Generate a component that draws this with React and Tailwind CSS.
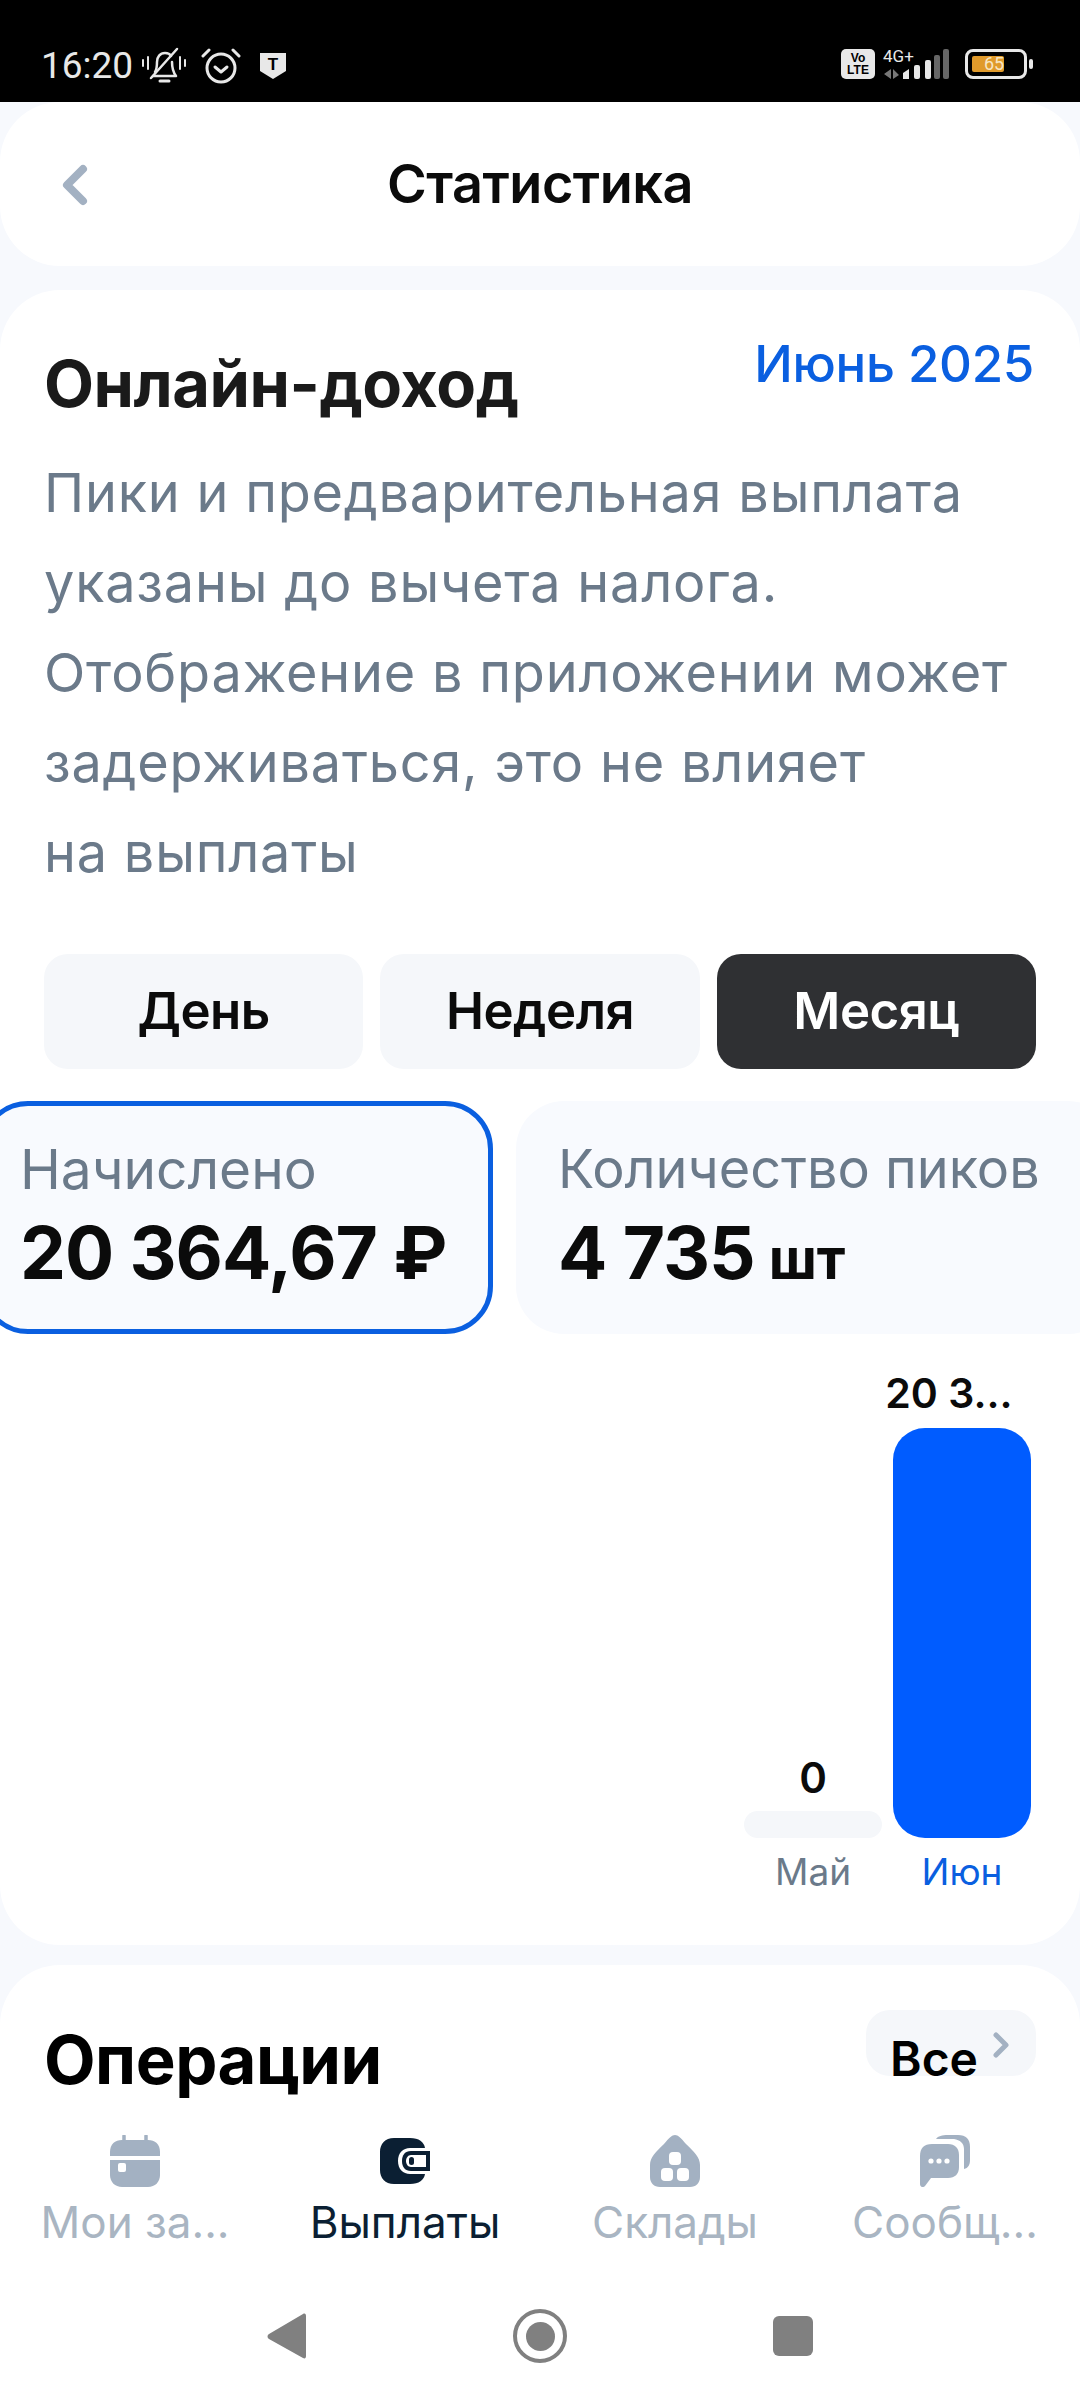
import { ChevronLeft, ChevronRight } from 'lucide-react';

const BellMutedIcon = () => (
  <svg width="44" height="38" viewBox="0 0 44 38" fill="none" stroke="#e8e8e8" strokeWidth="2.5" strokeLinecap="round" strokeLinejoin="round">
    <path d="M13 25c2-3 2-6 2-10 0-5 3-9 8-9 3 0 5 1 6 3" />
    <path d="M30 15c0 6 1 10 4 14H11" />
    <path d="M18 34h9" strokeWidth="3" />
    <path d="M9 31 35 2" />
    <path d="M1 13v6M6 10v12M38 10v12M43 13v6" strokeWidth="2" />
  </svg>
);

const AlarmIcon = () => (
  <svg width="40" height="36" viewBox="0 0 40 36" fill="none" stroke="#e8e8e8" strokeLinecap="round" strokeLinejoin="round">
    <circle cx="20" cy="20" r="14" strokeWidth="3" />
    <path d="M14 19l6 5 6-5" strokeWidth="3" />
    <path d="M2 8 8 2M38 8 32 2" strokeWidth="3" />
  </svg>
);

const CalendarIcon = () => (
  <svg width="50" height="52" viewBox="0 0 50 52">
    <path d="M14 1v8M36 1v8" stroke="#a3b1c2" strokeWidth="3.5" strokeLinecap="round" />
    <path d="M0 17C0 9 5 5 12 5h26c7 0 12 4 12 12v4H0z" fill="#a3b1c2" />
    <path d="M0 25h50v15c0 7-5 12-12 12H12C5 52 0 47 0 40z" fill="#a3b1c2" />
    <rect x="8" y="28" width="8" height="9" rx="2" fill="#fff" />
  </svg>
);

const WalletIcon = () => (
  <svg width="50" height="46" viewBox="0 0 50 46">
    <path d="M14 0h16c9 0 14 4 15 10H30c-7 0-12 5-12 13s5 13 12 13h15c-1 6-6 10-15 10H14C5 46 0 40 0 32V14C0 6 5 0 14 0z" fill="#0b1f33" />
    <path d="M31 13h19v20H31c-6 0-9-4-9-10s3-10 9-10z" fill="#0b1f33" />
    <path d="M31 17h15v12H31c-3 0-5-3-5-6s2-6 5-6z" fill="#fff" />
    <rect x="29" y="19" width="5" height="8" rx="2.5" fill="#0b1f33" />
  </svg>
);

const WarehouseIcon = () => (
  <svg width="50" height="52" viewBox="0 0 50 52">
    <path d="M25 0c3 0 6 3 11 9 8 8 14 13 14 21v12c0 6-4 10-10 10H10C4 52 0 48 0 42V30C0 22 6 17 14 9 19 3 22 0 25 0z" fill="#a3b1c2" />
    <rect x="19" y="17" width="12" height="13" rx="4" fill="#fff" />
    <rect x="11" y="33" width="12" height="13" rx="4" fill="#fff" />
    <rect x="27" y="33" width="12" height="13" rx="4" fill="#fff" />
  </svg>
);

const ChatIcon = () => (
  <svg width="50" height="52" viewBox="0 0 50 52">
    <path d="M16 4c2-3 6-4 12-4h10c8 0 12 4 12 12v13c0 5-2 8-6 9V14c0-6-4-9-10-10z" fill="#a3b1c2" />
    <path d="M12 9h16c7 0 11 4 11 11v12c0 7-4 11-11 11H11l-6 8c-2 2-5 1-5-2V21C0 13 4 9 12 9z" fill="#a3b1c2" />
    <circle cx="11" cy="26" r="2.6" fill="#fff" />
    <circle cx="19" cy="26" r="2.6" fill="#fff" />
    <circle cx="27" cy="26" r="2.6" fill="#fff" />
  </svg>
);

const navItems = [
  { label: 'Мои за...', Icon: CalendarIcon },
  { label: 'Выплаты', Icon: WalletIcon, active: true },
  { label: 'Склады', Icon: WarehouseIcon },
  { label: 'Сообщ...', Icon: ChatIcon },
];

const StatusBar = () => (
  <div className="h-[102px] shrink-0 bg-black flex items-end justify-between pl-[41px] pr-[47px] text-[#e8e8e8]">
    <div className="flex items-center pb-[17px]">
      <span className="text-[37px] leading-[36px] font-['Roboto',sans-serif]">16:20</span>
      <div className="ml-[9px]">
        <BellMutedIcon />
      </div>
      <div className="ml-[15px]">
        <AlarmIcon />
      </div>
      <svg width="28" height="28" viewBox="0 0 28 28" className="ml-[18px]">
        <path d="M1 1h26v18l-13 8-13-8z" fill="#e8e8e8" />
        <text x="14" y="18" textAnchor="middle" fontSize="17" fontWeight="900" fill="#000" fontFamily="Liberation Sans, sans-serif">T</text>
      </svg>
    </div>
    <div className="flex items-end gap-[8px] pb-[23px]">
      <div className="w-[34px] h-[30px] rounded-[5px] bg-[#e8e8e8] text-black flex flex-col items-center justify-center text-[12px] leading-[12px] font-bold font-['Liberation_Sans',sans-serif]">
        <span>Vo</span>
        <span>LTE</span>
      </div>
      <div className="relative w-[68px] h-[30px]">
        <span className="absolute left-0 top-[-1px] text-[17px] leading-[17px] font-['Roboto',sans-serif]">4G+</span>
        <svg width="68" height="30" viewBox="0 0 68 30" className="absolute left-0 top-0">
          <path d="M8 20v10l-7-5zM10 20l6 6-6 4z" fill="#777" />
          <path d="M20 24l6-4v10h-6z" fill="#e8e8e8" />
          <rect x="31" y="16" width="6" height="14" rx="2" fill="#e8e8e8" />
          <rect x="42" y="11" width="6" height="19" rx="2" fill="#e8e8e8" />
          <rect x="51" y="6" width="6" height="24" rx="2" fill="#666" />
          <rect x="60" y="0" width="6" height="30" rx="2" fill="#666" />
        </svg>
      </div>
      <div className="ml-[6px] w-[62px] h-[30px] rounded-[8px] border-[3px] border-[#e8e8e8] p-[4px] flex">
        <div className="w-[32px] h-full rounded-[2px] bg-[#e09a2b] flex items-center pl-[12px] text-[18px] leading-[18px] text-[#f7e6c4] font-['Roboto',sans-serif]">65</div>
      </div>
      <div className="w-[4px] h-[10px] rounded-[2px] bg-[#e8e8e8] -ml-[6px] mb-[10px]"></div>
    </div>
  </div>
);

export default function App() {
  return (
    <div className="w-[1080px] h-[2400px] bg-[#f7f9fd] flex flex-col overflow-hidden font-['Inter',sans-serif]">
      <StatusBar />

      {/* Header */}
      <div className="h-[164px] shrink-0 bg-white rounded-[60px] flex items-center justify-center relative">
        <ChevronLeft size={64} strokeWidth={3} className="absolute left-[43px] top-[51px] text-[#a3b1c2]" />
        <h1 className="text-[54px] leading-[60px] font-semibold text-[#0b0b0b] tracking-[-0.5px]">Статистика</h1>
      </div>

      <div className="flex-1 min-h-0 overflow-hidden pt-[24px]">
        {/* Card */}
        <div className="h-[1655px] bg-white rounded-[60px] pt-[44px]">
          <div className="flex justify-between pl-[44px] pr-[46px]">
            <h2 className="text-[65px] leading-[72px] mt-[14px] font-bold text-[#1a1a1a] tracking-[-0.5px]">Онлайн-доход</h2>
            <span className="text-[51px] leading-[60px] font-medium text-[#0a5fe0] tracking-[-0.3px]">Июнь 2025</span>
          </div>
          <p className="pl-[44px] pr-[20px] mt-[28px] text-[54px] leading-[90px] tracking-[0.8px] text-[#6b7a8a] whitespace-nowrap">
            Пики и предварительная выплата
            <br />
            указаны до вычета налога.
            <br />
            Отображение в приложении может
            <br />
            задерживаться, это не влияет
            <br />
            на выплаты
          </p>

          <div className="mt-[56px] px-[44px] grid grid-cols-3 gap-[17px]">
            <button className="h-[115px] rounded-[24px] bg-[#f5f7fa] text-[51px] font-semibold text-[#0b0b0b] tracking-[-0.5px]">День</button>
            <button className="h-[115px] rounded-[24px] bg-[#f5f7fa] text-[51px] font-semibold text-[#0b0b0b] tracking-[-0.5px]">Неделя</button>
            <button className="h-[115px] rounded-[24px] bg-[#2f3033] text-[51px] font-semibold text-white tracking-[-0.5px]">Месяц</button>
          </div>

          <div className="mt-[32px] flex gap-[23px] -ml-[20px] overflow-hidden">
            <div className="w-[513px] h-[233px] shrink-0 rounded-[48px] border-[5px] border-[#0a5fe0] bg-[#f8fafe] pl-[35px] pt-[31px]">
              <p className="text-[55px] leading-[64px] text-[#6b7a8a]">Начислено</p>
              <p className="mt-[10px] text-[73px] leading-[84px] font-bold text-[#0b0b0b] tracking-[-1px] whitespace-nowrap">20 364,67 ₽</p>
            </div>
            <div className="w-[600px] h-[233px] shrink-0 rounded-[48px] bg-[#f8fafe] pl-[42px] pt-[36px]">
              <p className="text-[54px] leading-[64px] text-[#6b7a8a] whitespace-nowrap">Количество пиков</p>
              <p className="mt-[10px] text-[73px] leading-[84px] font-bold text-[#0b0b0b] tracking-[-1px] whitespace-nowrap">
                4 735<span className="text-[56px] ml-[14px] tracking-normal">шт</span>
              </p>
            </div>
          </div>

          {/* Chart */}
          <div className="h-[530px] mt-[28px] pr-[49px] flex justify-end items-end gap-[11px]">
            <div className="w-[138px] flex flex-col items-center">
              <span className="text-[42px] leading-[50px] font-semibold text-[#0b0b0b]">0</span>
              <div className="mt-[8px] w-full h-[27px] rounded-[14px] bg-[#f5f7fa]"></div>
              <span className="mt-[14px] text-[37px] leading-[40px] text-[#6b7a8a]">Май</span>
            </div>
            <div className="w-[138px] flex flex-col items-center">
              <span className="mr-[26px] text-[41px] leading-[50px] font-semibold text-[#0b0b0b] whitespace-nowrap">20 3...</span>
              <div className="mt-[10px] w-full h-[410px] rounded-[32px] bg-[#005cff]"></div>
              <span className="mt-[14px] text-[37px] leading-[40px] text-[#0a5fe0]">Июн</span>
            </div>
          </div>
        </div>

        {/* Operations */}
        <div className="mt-[20px] h-[300px] bg-white rounded-[60px] flex justify-between items-start pl-[44px] pr-[44px] pt-[45px]">
          <h2 className="mt-[14px] text-[67px] leading-[72px] font-bold text-black tracking-[-0.5px]">Операции</h2>
          <div className="w-[170px] h-[66px] overflow-hidden rounded-[24px] bg-[#f5f7fa] flex pl-[24px] pt-[16px] text-[48px] leading-[66px] font-semibold text-black">
            <span>Все</span>
            <ChevronRight size={40} strokeWidth={3} className="text-[#a3b1c2] ml-[3px] mt-[-1px]" />
          </div>
        </div>
      </div>

      {/* Bottom nav */}
      <div className="h-[300px] shrink-0 bg-white flex flex-col">
        <div className="grid grid-cols-4 pt-[35px]">
          {navItems.map(({ label, Icon, active }) => (
            <div key={label} className="flex flex-col items-center">
              <div className="h-[52px] flex items-center">
                <Icon />
              </div>
              <span className={`mt-[9px] text-[44px] leading-[52px] ${active ? 'text-[#0b1f33]' : 'text-[#a9b5c2]'}`}>{label}</span>
            </div>
          ))}
        </div>
        <div className="mt-[61px] flex justify-center items-center gap-[206px]">
          <svg width="40" height="46" viewBox="0 0 40 46">
            <path d="M36 1c2-1 3 0 3 2v40c0 2-1 3-3 2L2 26c-2-1-2-4 0-5z" fill="#808080" />
          </svg>
          <div className="w-[54px] h-[54px] rounded-full border-[4px] border-[#808080] flex items-center justify-center">
            <div className="w-[29px] h-[29px] rounded-full bg-[#808080]"></div>
          </div>
          <div className="w-[40px] h-[40px] rounded-[6px] bg-[#808080]"></div>
        </div>
      </div>
    </div>
  );
}
